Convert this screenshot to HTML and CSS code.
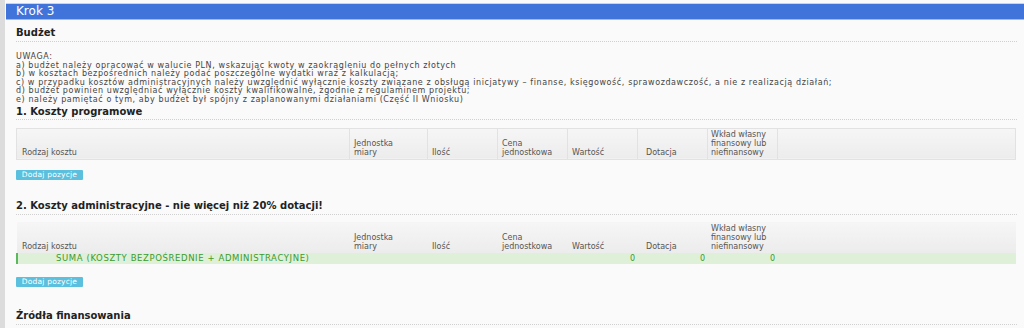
FILE: index.html
```html
<!DOCTYPE html>
<html lang="pl">
<head>
<meta charset="utf-8">
<link rel="stylesheet" href="styles.css">
</head>
<body>
<div class="frame">
  <div class="step">Krok 3</div>
  <div class="content">
    <h2 class="title">Budżet</h2>
    <div class="notes">
      <p>UWAGA:</p>
      <p>a) budżet należy opracować w walucie PLN, wskazując kwoty w zaokrągleniu do pełnych złotych</p>
      <p>b) w kosztach bezpośrednich należy podać poszczególne wydatki wraz z kalkulacją;</p>
      <p>c) w przypadku kosztów administracyjnych należy uwzględnić wyłącznie koszty związane z obsługą inicjatywy – finanse, księgowość, sprawozdawczość, a nie z realizacją działań;</p>
      <p>d) budżet powinien uwzględniać wyłącznie koszty kwalifikowalne, zgodnie z regulaminem projektu;</p>
      <p>e) należy pamiętać o tym, aby budżet był spójny z zaplanowanymi działaniami (Część II Wniosku)</p>
    </div>
    <h3 class="subtitle">1. Koszty programowe</h3>
    <table class="grid grid-lined">
      <colgroup><col class="c1"><col class="c2"><col class="c3"><col class="c4"><col class="c5"><col class="c6"><col class="c7"><col></colgroup>
      <thead>
        <tr>
          <th class="first">Rodzaj kosztu</th>
          <th>Jednostka<br>miary</th>
          <th>Ilość</th>
          <th>Cena<br>jednostkowa</th>
          <th>Wartość</th>
          <th class="wide">Dotacja</th>
          <th class="narrow">Wkład własny<br>finansowy lub<br>niefinansowy</th>
          <th></th>
        </tr>
      </thead>
    </table>
    <button class="btn" type="button">Dodaj pozycje</button>
    <h3 class="subtitle sub2">2. Koszty administracyjne - nie więcej niż 20% dotacji!</h3>
    <table class="grid">
      <colgroup><col class="c1"><col class="c2"><col class="c3"><col class="c4"><col class="c5"><col class="c6"><col class="c7"><col></colgroup>
      <thead>
        <tr>
          <th class="first">Rodzaj kosztu</th>
          <th>Jednostka<br>miary</th>
          <th>Ilość</th>
          <th>Cena<br>jednostkowa</th>
          <th>Wartość</th>
          <th class="wide">Dotacja</th>
          <th class="narrow">Wkład własny<br>finansowy lub<br>niefinansowy</th>
          <th></th>
        </tr>
      </thead>
      <tbody>
        <tr class="sum">
          <td colspan="4" class="sum-label">SUMA (KOSZTY BEZPOŚREDNIE + ADMINISTRACYJNE)</td>
          <td class="num">0</td>
          <td class="num">0</td>
          <td class="num">0</td>
          <td></td>
        </tr>
      </tbody>
    </table>
    <button class="btn btn2" type="button">Dodaj pozycje</button>
    <h2 class="title title-src">Źródła finansowania</h2>
  </div>
</div>
</body>
</html>
```

FILE: styles.css
```css
html, body {
  margin: 0;
  padding: 0;
  background: #fafafa;
}
body {
  font-family: "DejaVu Sans", "Open Sans", sans-serif;
  color: #555;
  height: 328px;
  overflow: hidden;
}
.frame {
  border-left: 5px solid #dcdcdc;
  width: 1024px;
  min-height: 328px;
  padding-top: 3px;
  box-sizing: border-box;
}
.step {
  background: #4174db;
  border-top: 1px solid #bcdcd6;
  border-bottom: 1px solid #9cc4c0;
  color: #fff;
  font-size: 12px;
  line-height: 15px;
  height: 15px;
  padding-left: 10px;
  margin-left: 1px;
}
.content {
  padding: 0 7px 0 11px;
}
.title {
  font-size: 10px;
  font-weight: 700;
  color: #222;
  margin: 0;
  padding-top: 7px;
  line-height: 12px;
  padding-bottom: 2px;
  border-bottom: 1px dotted #d0d0d0;
}
.notes {
  margin-top: 11px;
  font-size: 8px;
  letter-spacing: 0.6px;
  line-height: 8.6px;
  color: #444;
}
.notes p {
  margin: 0;
  white-space: nowrap;
}
.subtitle {
  font-size: 10px;
  font-weight: 700;
  color: #222;
  margin: 1px 0 0 0;
  line-height: 12px;
  padding-bottom: 1px;
  border-bottom: 1px dotted #d0d0d0;
}
.sub2 {
  margin-top: 20px;
  padding-bottom: 2px;
}
.grid {
  margin-top: 8px;
  width: 1000px;
  border-collapse: collapse;
  table-layout: fixed;
}
.sub2 + .grid {
  margin-top: 7px;
}
.c1 { width: 333px; }
.c2 { width: 78px; }
.c3 { width: 70px; }
.c4 { width: 70px; }
.c5 { width: 70px; }
.c6 { width: 70px; }
.c7 { width: 70px; }
.grid th {
  background: linear-gradient(#f6f6f6, #ececec);
  font-weight: 400;
  font-size: 8px;
  line-height: 9px;
  color: #555;
  text-align: left;
  vertical-align: bottom;
  height: 31px;
  padding: 0 2px 2px 4px;
  box-sizing: border-box;
  white-space: nowrap;
  overflow: visible;
}
.grid th.first { padding-left: 5px; }
.grid th.wide { padding-left: 8px; }
.grid th.narrow { padding-left: 3px; }
.grid-lined th {
  border: 1px solid #e2e2e2;
}
.sum td {
  background: #dff0d8;
  color: #3c9a2e;
  font-size: 8px;
  line-height: 11px;
  height: 11px;
  padding: 0 3px;
}
.sum .sum-label {
  border-left: 2px solid #5cb85c;
  padding-left: 38px;
  font-size: 8.5px;
  letter-spacing: 0.6px;
}
.sum .num {
  text-align: right;
}
.btn {
  display: block;
  margin-top: 10px;
  background: #5bc0de;
  border: 0;
  border-radius: 1px;
  color: #fff;
  font-family: "DejaVu Sans", "Open Sans", sans-serif;
  font-size: 7.5px;
  letter-spacing: 0.2px;
  line-height: 10px;
  height: 10px;
  padding: 0;
  width: 67px;
}
.btn2 {
  margin-top: 13px;
}
.title-src {
  margin-top: 16px;
}
```
